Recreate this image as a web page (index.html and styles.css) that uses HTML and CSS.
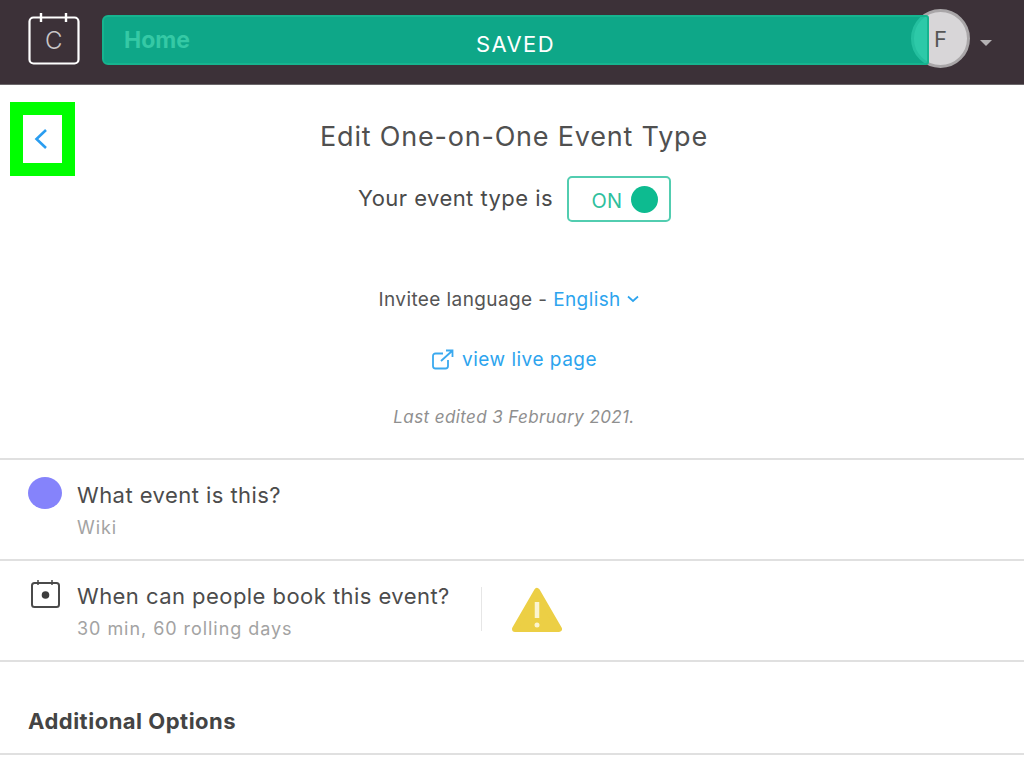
FILE: index.html
```html
<!DOCTYPE html>
<html lang="en">
<head>
<meta charset="utf-8">
<title>Edit One-on-One Event Type</title>
<link rel="stylesheet" href="styles.css">
</head>
<body>
<header class="topbar">
  <svg class="logo" width="54" height="54" viewBox="0 0 54 54" fill="none">
    <rect x="2.500" y="6.500" width="49" height="46" rx="4" stroke="#fff" stroke-width="2.200"/>
    <path d="M14 2v9M39 2v9" stroke="#fff" stroke-width="2.400"/>
  </svg>
  <span class="logo-c">C</span>
  <div class="avatar">F</div>
  <span class="caret"></span>
  <div class="toast">
    <span class="toast-home">Home</span>
    <span class="toast-saved">SAVED</span>
  </div>
</header>
<main class="page">
  <div class="hero">
    <a class="back">
      <svg width="16" height="22" viewBox="0 0 16 22" fill="none"><path d="M13 2 3.500 11 13 20" stroke="#2a9df0" stroke-width="2.600"/></svg>
    </a>
    <h1 class="title">Edit One-on-One Event Type</h1>
    <div class="status">
      <span class="status-text">Your event type is</span>
      <span class="toggle"><span class="toggle-label">ON</span><span class="toggle-dot"></span></span>
    </div>
    <div class="language">Invitee language - <a class="link">English</a>
      <svg class="chev" width="12" height="8" viewBox="0 0 12 8" fill="none"><path d="M1 1.500 6 6l5-4.500" stroke="#2da4ee" stroke-width="1.700"/></svg>
    </div>
    <a class="live link">
      <svg width="24" height="22" viewBox="0 0 24 22" fill="none" stroke="#3aa9ef" stroke-width="1.800"><path d="M12 4.500H4.500a2.500 2.500 0 0 0-2.500 2.500v10a2.500 2.500 0 0 0 2.500 2.500h10a2.500 2.500 0 0 0 2.500-2.500v-6"/><path d="M10 12 21 2M15 1.500h6.500V8"/></svg>
      <span>view live page</span>
    </a>
    <p class="edited">Last edited 3 February 2021.</p>
  </div>
  <section class="row">
    <span class="dot"></span>
    <div>
      <div class="row-title">What event is this?</div>
      <div class="row-sub">Wiki</div>
    </div>
  </section>
  <section class="row">
    <svg class="cal" width="34" height="30" viewBox="0 0 34 30" fill="none">
      <rect x="4" y="4" width="27" height="24" rx="2.500" stroke="#4a4a4a" stroke-width="2"/>
      <path d="M10 1v5M24 1v5" stroke="#4a4a4a" stroke-width="1.500"/>
      <circle cx="17.500" cy="16" r="3.800" fill="#3c3c3c"/>
    </svg>
    <div>
      <div class="row-title">When can people book this event?</div>
      <div class="row-sub">30 min, 60 rolling days</div>
    </div>
    <span class="divider"></span>
    <svg class="warn" width="50" height="48" viewBox="0 0 50 48">
      <path d="M25 4 47 42H3Z" fill="#eccf45" stroke="#eccf45" stroke-width="6" stroke-linejoin="round"/>
      <path d="M25 15v16" stroke="#fbf4d0" stroke-width="4.500"/>
      <circle cx="25" cy="38" r="2.500" fill="#fbf4d0"/>
    </svg>
  </section>
  <section class="options">Additional Options</section>
</main>
</body>
</html>
```
FILE: styles.css
```css
* { box-sizing: border-box; }
html, body { margin: 0; height: 100%; overflow: hidden; }
body {
  font-family: "Inter", "Liberation Sans", sans-serif;
  color: #4a4a4a;
  background: #fff;
}
.topbar {
  position: relative;
  height: 85px;
  background: #3c3138;
  border-bottom: 1px solid #6b676a;
  display: flex;
  align-items: center;
  padding-left: 27px;
}
.logo { margin-top: -8px; flex: none; }
.logo-c {
  position: absolute;
  left: 45px; top: 26px;
  color: #c9c6c8;
  font-size: 24px;
  font-weight: 300;
}
.avatar {
  position: absolute;
  left: 911px; top: 9px;
  width: 59px; height: 59px;
  border-radius: 50%;
  background: #d8d6d8;
  border: 3px solid #a9a6a8;
  color: #555;
  font-size: 22px;
  display: flex;
  align-items: center;
  justify-content: center;
}
.caret {
  position: absolute;
  left: 980px; top: 40px;
  border: 6px solid transparent;
  border-bottom: 0;
  border-top-color: #b5b2b4;
}
.toast {
  position: absolute;
  left: 102px; top: 15px;
  width: 827px; height: 50px;
  background: rgba(3, 198, 156, .8);
  border: 2px solid #16b48f;
  border-radius: 6px;
  border-top-right-radius: 3px;
  border-bottom-right-radius: 3px;
}
.toast-home {
  position: absolute;
  left: 20px; top: 9px;
  color: #35c9a5;
  font-size: 23px;
  font-weight: 700;
}
.toast-saved {
  position: absolute;
  left: 0; right: 0; top: 14px;
  text-align: center;
  color: #fff;
  font-size: 22px;
  letter-spacing: 1.400px;
}
.hero {
  position: relative;
  height: 375px;
  border-bottom: 2px solid #e0e0e0;
  display: flex;
  flex-direction: column;
  align-items: center;
  padding-left: 4px;
}
.back {
  position: absolute;
  left: 10px; top: 17px;
  width: 65px; height: 74px;
  border: 13px solid #00ff00;
  display: flex;
  align-items: center;
  justify-content: center;
  padding-right: 3px;
}
.title {
  margin: 34px 0 0;
  font-size: 27px;
  line-height: 36px;
  font-weight: 400;
  color: #505050;
  letter-spacing: .8px;
}
.status {
  margin-top: 21px;
  margin-left: 1px;
  display: flex;
  align-items: center;
  gap: 14px;
  font-size: 22px;
  letter-spacing: .45px;
}
.status-text { margin-top: -2px; }
.toggle {
  width: 104px; height: 46px;
  border: 2px solid #52cdb0;
  border-radius: 5px;
  display: flex;
  align-items: center;
  justify-content: flex-end;
  gap: 9px;
  padding-right: 11px;
}
.toggle-label { color: #2fbf9d; font-size: 20px; letter-spacing: 0; margin-top: 3px; }
.toggle-dot { width: 27px; height: 27px; border-radius: 50%; background: #0dbb90; }
.language { margin-top: 66px; margin-left: -11px; font-size: 19px; line-height: 24px; color: #555; letter-spacing: .4px; }
.link { color: #2da4ee; }
.chev { vertical-align: 3px; }
.live {
  margin-top: 35px;
  display: flex;
  align-items: center;
  gap: 7px;
  font-size: 19px;
  line-height: 26px;
  letter-spacing: .5px;
}
.edited {
  margin: 33px 0 0;
  font-size: 17px;
  line-height: 22px;
  font-style: italic;
  color: #8f8f8f;
  letter-spacing: .4px;
}
.row {
  height: 101px;
  border-bottom: 2px solid #e0e0e0;
  display: flex;
  align-items: flex-start;
  padding: 18px 0 0 28px;
}
.dot {
  width: 34px; height: 32px;
  margin-top: -1px;
  border-radius: 50%;
  background: #8583fb;
  margin-right: 15px;
  flex: none;
}
.cal { margin-right: 15px; flex: none; }
.row-title { font-size: 22px; line-height: 32px; color: #4c4c4c; letter-spacing: .45px; margin-top: 1px; }
.row-sub { margin-top: 5px; font-size: 18px; line-height: 24px; color: #a3a3a3; letter-spacing: .95px; }
.divider { width: 1px; height: 44px; background: #e6e6e6; margin: 8px 30px 0 31px; }
.warn { margin-top: 8px; }
.options {
  height: 93px;
  border-bottom: 2px solid #e0e0e0;
  padding: 45px 0 0 28px;
  font-size: 22px;
  line-height: 28px;
  font-weight: 700;
  color: #444;
  letter-spacing: .5px;
}
```
